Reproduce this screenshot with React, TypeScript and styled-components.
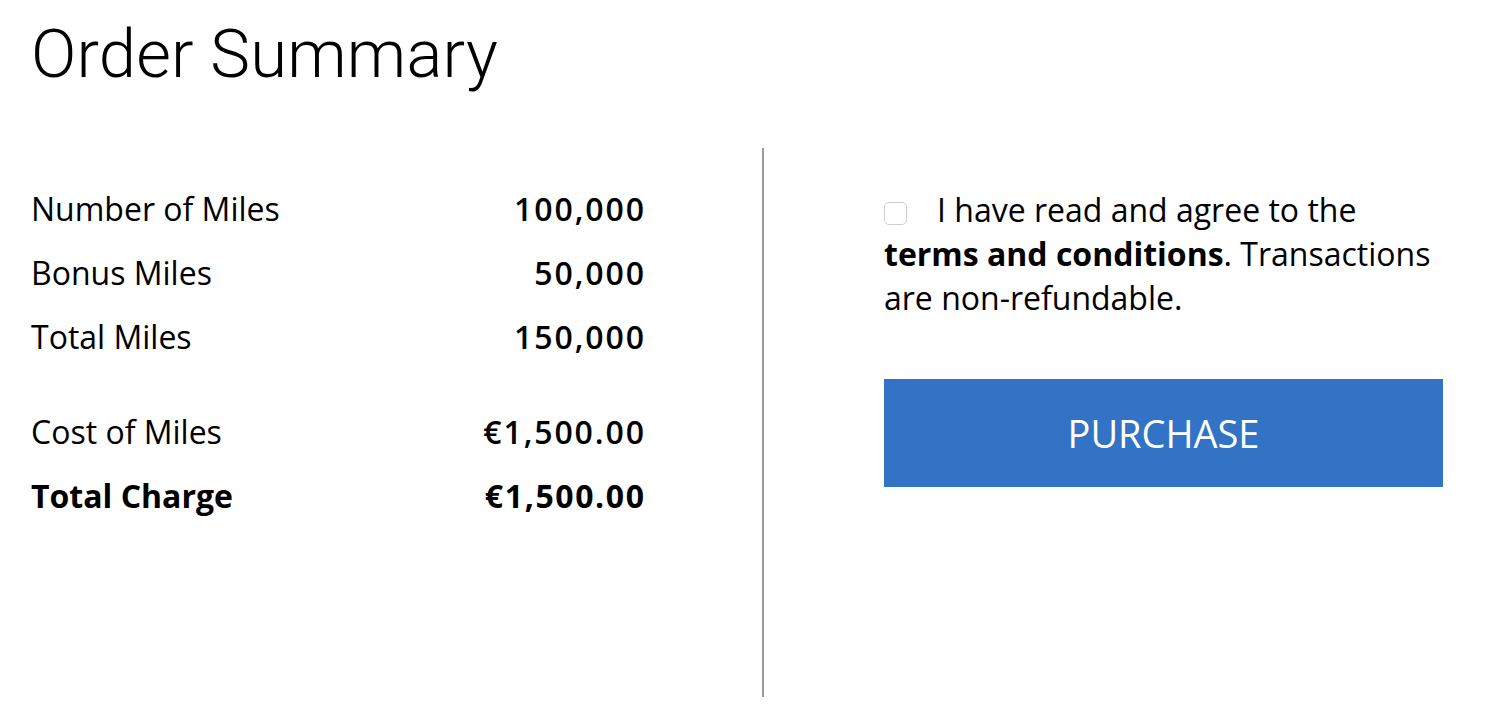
import React from "react";
import styled, { createGlobalStyle } from "styled-components";

const Global = createGlobalStyle`
  html, body { margin: 0; padding: 0; background: #fff; }
  body { font-family: "Open Sans", "Liberation Sans", sans-serif; color: #000; }
`;

const Page = styled.div`
  width: 1492px;
  height: 710px;
  overflow: hidden;
  box-sizing: border-box;
  padding: 14px 0 0 0;
`;

const Title = styled.h1`
  margin: 0 0 0 31px;
  font-family: Roboto, "Liberation Sans", sans-serif;
  font-weight: 300;
  font-size: 67px;
  line-height: 80px;
  letter-spacing: 0.2px;
`;

const Body = styled.div`
  display: flex;
  margin-top: 54px;
  height: 549px;
`;

const Summary = styled.div`
  width: 613px;
  margin-left: 31px;
  padding-top: 29px;
  display: flex;
  flex-direction: column;
`;

const Row = styled.div<{ $bold?: boolean; $gapTop?: boolean }>`
  display: flex;
  justify-content: space-between;
  font-size: 32px;
  line-height: 64px;
  font-weight: ${(p) => (p.$bold ? 700 : 400)};
  margin-top: ${(p) => (p.$gapTop ? "31px" : "0")};
`;

const Value = styled.span<{ $strong?: boolean }>`
  font-weight: ${(p) => (p.$strong ? 700 : 600)};
  letter-spacing: ${(p) => (p.$strong ? "1.6px" : "1.9px")};
  margin-right: ${(p) => (p.$strong ? "-1.6px" : "-1.9px")};
`;

const Divider = styled.div`
  width: 2px;
  background: #9a9a9a;
  margin-left: 118px;
  align-self: stretch;
`;

const Side = styled.div`
  margin-left: 120px;
  width: 560px;
  padding-top: 40px;
`;

const Agree = styled.label`
  display: block;
  font-size: 32px;
  line-height: 44px;
`;

const Box = styled.span`
  display: inline-block;
  width: 21px;
  height: 21px;
  border: 1px solid #cfcfcf;
  border-radius: 5px;
  background: #fff;
  vertical-align: -3px;
  margin-right: 30px;
  box-sizing: content-box;
`;

const Button = styled.button`
  display: block;
  width: 559px;
  height: 108px;
  margin-top: 59px;
  border: 0;
  padding: 0;
  background: #3273c6;
  color: #fff;
  font-family: "Open Sans", "Liberation Sans", sans-serif;
  font-weight: 400;
  font-size: 38px;
  cursor: pointer;
`;

const rows = [
  { label: "Number of Miles", value: "100,000" },
  { label: "Bonus Miles", value: "50,000" },
  { label: "Total Miles", value: "150,000" },
];

export default function App() {
  return (
    <Page>
      <Global />
      <Title>Order Summary</Title>
      <Body>
        <Summary>
          {rows.map((r) => (
            <Row key={r.label}>
              <span>{r.label}</span>
              <Value>{r.value}</Value>
            </Row>
          ))}
          <Row $gapTop>
            <span>Cost of Miles</span>
            <Value>€1,500.00</Value>
          </Row>
          <Row $bold>
            <span>Total Charge</span>
            <Value $strong>€1,500.00</Value>
          </Row>
        </Summary>
        <Divider />
        <Side>
          <Agree>
            <Box />I have read and agree to the <b>terms and conditions</b>. Transactions are non-refundable.
          </Agree>
          <Button>PURCHASE</Button>
        </Side>
      </Body>
    </Page>
  );
}
